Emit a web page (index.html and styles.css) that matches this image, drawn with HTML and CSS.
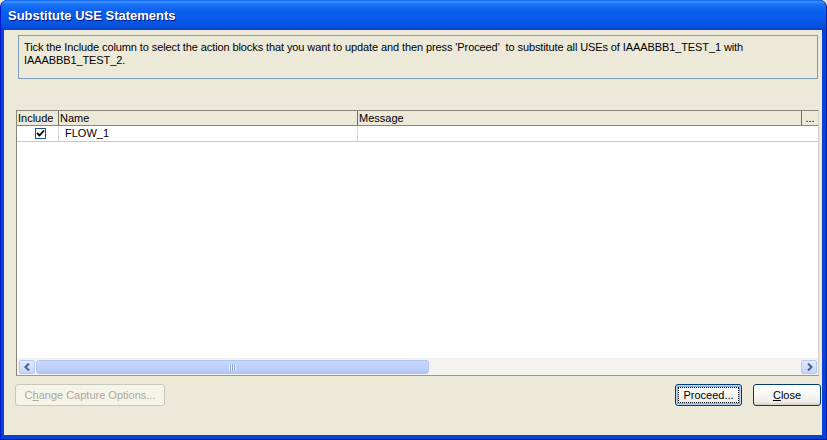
FILE: index.html
```html
<!DOCTYPE html>
<html>
<head>
<meta charset="utf-8">
<link rel="stylesheet" href="styles.css">
</head>
<body>
<div class="window">
  <div class="titlebar"><span class="title">Substitute USE Statements</span></div>
  <div class="client">
    <div class="info">Tick the Include column to select the action blocks that you want to update and then press 'Proceed'&nbsp; to substitute all USEs of IAAABBB1_TEST_1 with IAAABBB1_TEST_2.</div>
    <div class="grid">
      <div class="head">
        <div class="hc c1">Include</div>
        <div class="hc c2">Name</div>
        <div class="hc c3">Message</div>
        <div class="hc c4">...</div>
      </div>
      <div class="row">
        <div class="cell c1"><span class="check"><svg width="9" height="9" viewBox="0 0 9 9"><path d="M1 4 L3.5 6.5 L8 1.5" fill="none" stroke="#000" stroke-width="1.8"/></svg></span></div>
        <div class="cell c2">FLOW_1</div>
        <div class="cell c3"></div>
      </div>
      <div class="body"></div>
      <div class="hscroll">
        <div class="sbtn"><svg width="7" height="8" viewBox="0 0 7 8"><path d="M5 0.5 L1.5 4 L5 7.5" fill="none" stroke="#4D6185" stroke-width="2"/></svg></div>
        <div class="track">
          <div class="thumb"><span class="grip"></span></div>
        </div>
        <div class="sbtn"><svg width="7" height="8" viewBox="0 0 7 8"><path d="M2 0.5 L5.5 4 L2 7.5" fill="none" stroke="#4D6185" stroke-width="2"/></svg></div>
      </div>
    </div>
    <div class="buttons">
      <button class="btn disabled">C<u>h</u>ange Capture Options...</button>
      <div class="spacer"></div>
      <button class="btn default"><span class="focus">Proceed...</span></button>
      <button class="btn close"><u>C</u>lose</button>
    </div>
  </div>
</div>
</body>
</html>
```

FILE: styles.css
```css
html, body {
  margin: 0;
  padding: 0;
  background: #ECE9D8;
}
body {
  width: 827px;
  height: 440px;
  overflow: hidden;
  font-family: "Liberation Sans", Arial, sans-serif;
  font-size: 11px;
  color: #000;
}
.window {
  width: 827px;
  height: 440px;
  box-sizing: border-box;
  display: flex;
  flex-direction: column;
  background: #0842D6;
  border-radius: 7px 7px 0 0;
  padding: 0 4px 4px 3px;
  border-left: 1px solid #0019CF;
  border-right: 1px solid #001EA0;
  border-bottom: 1px solid #001EA0;
}
.titlebar {
  height: 30px;
  margin: 0 -4px 0 -3px;
  background: linear-gradient(to bottom, #0A5CF0 0%, #3D95FF 6%, #1A72F5 14%, #0A5EEE 40%, #0758E8 70%, #0550DC 88%, #0444C8 100%);
  border-radius: 7px 7px 0 0;
  display: flex;
  align-items: center;
  padding-left: 7px;
}
.title {
  font-family: "Liberation Sans", Arial, sans-serif;
  font-weight: bold;
  font-size: 13px;
  color: #fff;
  text-shadow: 1px 1px 0 #0A1883;
  margin-top: 1px;
}
.client {
  flex: 1;
  background: #ECE9D8;
  display: flex;
  flex-direction: column;
}
.info {
  margin: 5px 0 0 14px;
  width: 800px;
  height: 44px;
  box-sizing: border-box;
  border: 1px solid #7F9DB9;
  padding: 5px 20px 0 5px;
  line-height: 13px;
  letter-spacing: -0.1px;
}
.grid {
  margin: 31px 0 0 12px;
  width: 803px;
  height: 266px;
  box-sizing: border-box;
  border-top: 1px solid #8A877A;
  border-left: 1px solid #8A877A;
  border-right: 1px solid #D4D0C8;
  border-bottom: 1px solid #7F9DB9;
  display: flex;
  flex-direction: column;
  background: #fff;
}
.head {
  display: flex;
  height: 14px;
  background: #ECE9D8;
  border-bottom: 1px solid #8A877A;
}
.hc {
  box-sizing: border-box;
  line-height: 14px;
  padding-left: 1px;
  border-right: 1px solid #716F64;
}
.c1 { width: 42px; }
.c2 { width: 299px; }
.c3 { width: 444px; }
.c4 { width: 16px; border-right: none; text-align: center; padding-left: 0; }
.row {
  display: flex;
  height: 15px;
  border-bottom: 1px solid #C8C8C8;
}
.cell {
  box-sizing: border-box;
  line-height: 15px;
  border-right: 1px solid #D8D8D8;
}
.row .c2 { padding-left: 6px; }
.row .c1 {
  display: flex;
  align-items: center;
  justify-content: center;
  padding-left: 5px;
  border-right: 1px solid #D8D8D8;
}
.row .c3 { flex: 1; border-right: none; }
.check {
  width: 11px;
  height: 11px;
  box-sizing: border-box;
  border: 1px solid #1C5180;
  background: #fff;
  display: flex;
  align-items: center;
  justify-content: center;
}
.body { flex: 1; }
.hscroll {
  height: 16px;
  display: flex;
  align-items: center;
  background: #F4F3EE;
  padding: 0 1px 0 2px;
  border-top: 1px solid #F0EEE6;
}
.sbtn {
  width: 16px;
  height: 14px;
  box-sizing: border-box;
  border: 1px solid #B5C8F3;
  border-radius: 2px;
  background: linear-gradient(to bottom, #E2EBFE, #C2D3FC);
  display: flex;
  align-items: center;
  justify-content: center;
}
.track {
  flex: 1;
  height: 14px;
  display: flex;
  align-items: stretch;
  padding: 0 1px;
}
.thumb {
  width: 393px;
  box-sizing: border-box;
  border: 1px solid #B0C4F2;
  border-radius: 3px;
  background: linear-gradient(to bottom, #CAD9FD, #BCCFFB 60%, #B4C8F6);
  display: flex;
  align-items: center;
  justify-content: center;
}
.grip {
  width: 7px;
  height: 7px;
  background: repeating-linear-gradient(to right, #EEF4FE 0 1px, #8CA6DE 1px 2px);
}
.buttons {
  display: flex;
  align-items: center;
  margin: 8px 1px 0 11px;
  gap: 11px;
}
.spacer { flex: 1; }
.btn {
  height: 22px;
  box-sizing: border-box;
  border: 1px solid #003C74;
  border-radius: 3px;
  background: linear-gradient(to bottom, #FFFFFF 0%, #F7F7F4 50%, #ECEBE6 85%, #D6D0C5 100%);
  font-family: "Liberation Sans", Arial, sans-serif;
  font-size: 11px;
  color: #000;
  padding: 0;
  margin: 0;
}
.btn.disabled {
  width: 150px;
  border-color: #C9C7BA;
  background: #F5F4EA;
  color: #ACA899;
}
.btn.default {
  width: 67px;
  padding: 2px;
  box-shadow: inset 0 0 0 1px #BCD4F6, inset 0 0 0 2px #89ADE4;
}
.focus {
  display: block;
  height: 16px;
  line-height: 16px;
  outline: 1px dotted #000;
  outline-offset: -1px;
}
.btn.close {
  width: 68px;
}
```
